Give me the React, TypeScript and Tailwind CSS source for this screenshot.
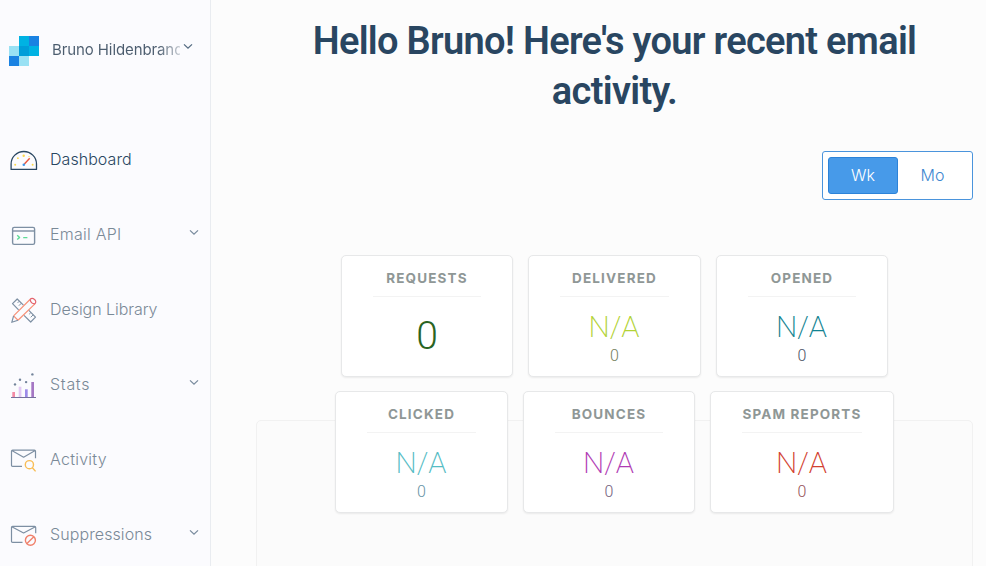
import type { ReactNode } from "react";

function Chevron({ color }: { color: string }) {
  return (
    <svg width="10" height="8" viewBox="0 0 10 8" fill="none" stroke={color} strokeWidth="1.3">
      <path d="M1 1.4 5 5.2 9 1.4" />
    </svg>
  );
}

function Icon({ children }: { children: ReactNode }) {
  return (
    <svg className="shrink-0" width="28" height="30" viewBox="0 0 28 30" fill="none" stroke="#7d8fa3" strokeWidth="1.2" strokeLinejoin="round">
      {children}
    </svg>
  );
}

const dashboardIcon = (
  <Icon>
    <path d="M1.1 24.4V19a12.7 12.5 0 0 1 25.4 0v5.4Z" stroke="#294661" strokeWidth="1.3" />
    <g fill="#fbd84b" stroke="none">
      <circle cx="13.7" cy="10.7" r="1.2" />
      <circle cx="7.9" cy="13.2" r="0.9" />
      <circle cx="19" cy="11.6" r="0.7" />
      <circle cx="5.2" cy="19.8" r="1" />
      <circle cx="22.6" cy="19.8" r="1" />
    </g>
    <path d="M14.4 19 19.7 13.2" stroke="#e8553c" strokeWidth="1.4" />
    <circle cx="13.8" cy="19.8" r="1.3" fill="#3d94e8" stroke="none" />
  </Icon>
);

const apiIcon = (
  <Icon>
    <rect x="2.6" y="7.4" width="22" height="17" rx="1.6" strokeWidth="1.4" />
    <path d="M2.6 11H24.6" strokeWidth="1.4" />
    <path d="M7.2 15.2 9.6 17.4 7.2 19.6M13.2 17.6H17.4" stroke="#5ddb95" strokeWidth="1.4" />
  </Icon>
);

const designIcon = (
  <Icon>
    <path d="M8.6 14.9 2.5 8.7 7.2 4 13.4 10.1M18.6 15.2 25.5 22.2 20.7 27 14 20.4" />
    <path d="M9.3 6.2 7.6 7.9M11.4 8.2 8.9 10.7M20.9 17.5 19.2 19.2M23.2 19.8 20.7 22.3" strokeWidth="1" />
    <path d="M3.6 20.9 20 4.5M8 25.2 24.9 8.9M3.6 20.9 8 25.2" stroke="#f79178" />
    <path d="M20 4.5C22.6 1.8 27.8 5.6 24.9 8.9M20 4.5C21 8 22 8.6 24.9 8.9" stroke="#e4636d" />
    <path d="M3.6 20.9 1.8 27.3 8 25.2" />
  </Icon>
);

const statsIcon = (
  <Icon>
    <g stroke="none">
      <path d="M2.3 22H5V27H2.3Z" fill="#f38ba6" />
      <path d="M8.7 16.7H11.4V27H8.7Z" fill="#e2c9f3" />
      <path d="M15 19.3H17.7V27H15Z" fill="#9d8be9" />
      <path d="M21.3 12H24V27H21.3Z" fill="#a577c4" />
      <g fill="#72839a">
        <circle cx="5" cy="14.4" r="1.2" />
        <circle cx="10" cy="9.7" r="1.2" />
        <circle cx="16.1" cy="12.1" r="1.2" />
        <circle cx="22.4" cy="4.4" r="1.2" />
      </g>
    </g>
    <path d="M1 27.5H26" stroke="#75709d" strokeWidth="1" />
  </Icon>
);

const activityIcon = (
  <Icon>
    <path d="M12 21.4H2.6Q1.5 21.4 1.5 20.3V6.3Q1.5 5.2 2.6 5.2H24.4Q25.5 5.2 25.5 6.3V13.2M1.8 5.6 13.6 12.2 25.2 5.6" />
    <circle cx="19.4" cy="19.7" r="4.1" stroke="#f8bd55" strokeWidth="1.4" />
    <path d="M22.4 22.8 25.6 26.4" stroke="#f8bd55" strokeWidth="1.4" />
  </Icon>
);

const suppressionsIcon = (
  <Icon>
    <path d="M12.5 22.4H2.6Q1.5 22.4 1.5 21.3V7.4Q1.5 6.3 2.6 6.3H24.6Q25.7 6.3 25.7 7.4V13.2M1.8 6.7 13.6 13 25.4 6.7" />
    <circle cx="20.4" cy="20.2" r="5" stroke="#f0806b" strokeWidth="1.4" />
    <path d="M17 23.6 23.8 16.8" stroke="#f0806b" strokeWidth="1.4" />
  </Icon>
);

const navItems = [
  { label: "Dashboard", icon: dashboardIcon, active: true, tracking: "tracking-[0.05px]" },
  { label: "Email API", icon: apiIcon, expandable: true, tracking: "tracking-[0.25px]" },
  { label: "Design Library", icon: designIcon, tracking: "tracking-[-0.05px]" },
  { label: "Stats", icon: statsIcon, expandable: true, tracking: "tracking-[0.7px]" },
  { label: "Activity", icon: activityIcon, tracking: "tracking-[0.25px]" },
  { label: "Suppressions", icon: suppressionsIcon, expandable: true, tracking: "tracking-[0.1px]" },
];

function Logo() {
  return (
    <svg className="shrink-0" width="30" height="30" viewBox="0 0 30 30" shapeRendering="crispEdges">
      <path d="M10 0H20V10H10Z" fill="#00b2e3" />
      <path d="M20 0H30V10H20Z" fill="#1a82e2" />
      <path d="M0 10H10V20H0Z" fill="#99e1f4" />
      <path d="M10 10H20V20H10Z" fill="#009dd9" />
      <path d="M20 10H30V20H20Z" fill="#00b2e3" />
      <path d="M0 20H10V30H0Z" fill="#1a82e2" />
      <path d="M10 20H20V30H10Z" fill="#99e1f4" />
    </svg>
  );
}

function Sidebar() {
  return (
    <aside className="w-[211px] shrink-0 border-r border-[#e9ecf0] bg-[#fbfbfe]">
      <div className="flex h-[122px] items-start pl-[9px] pt-9">
        <Logo />
        <div className="ml-[13px] mt-[2px] w-[128px] overflow-hidden whitespace-nowrap bg-linear-to-r from-[#4b5c6e] from-82% to-[#4b5c6e]/30 bg-clip-text text-[15px] leading-6 tracking-[-0.1px] text-transparent">
          Bruno Hildenbrand
        </div>
        <div className="ml-[3px] mt-[7px]">
          <Chevron color="#546b81" />
        </div>
      </div>
      <nav>
        {navItems.map((item) => (
          <div key={item.label} className="flex h-[75px] items-center pl-[10px] pr-[11px]">
            {item.icon}
            <span className={`mb-[2px] ml-3 flex-1 text-base font-light ${item.tracking} ${item.active ? "text-[#294661]" : "text-[#7a8997]"}`}>
              {item.label}
            </span>
            {item.expandable && (
              <div className="mb-1">
                <Chevron color="#7a8c9e" />
              </div>
            )}
          </div>
        ))}
      </nav>
    </aside>
  );
}

type CardProps = { title: string; value?: string; count?: string; color: string; countColor?: string; width?: string };

function StatCard({ title, value = "N/A", count, color, countColor = "", width = "w-[172px]" }: CardProps) {
  return (
    <section className={`${width} h-[122px] rounded-[5px] border border-[#e7e8e9] bg-white px-[31px] text-center shadow-[0_1px_2px_rgba(0,0,0,0.07)]`}>
      <h2 className="flex h-[41px] justify-center whitespace-nowrap border-b border-[#f3f3f3] pt-3 text-[13.5px] font-bold leading-5 tracking-[1.15px] text-[#8f9796]">
        {title}
      </h2>
      {count ? (
        <>
          <div className={`mt-[11px] h-[37px] pr-px font-[Roboto] text-[30px] font-extralight leading-[37px] ${color}`}>{value}</div>
          <div className={`font-[Roboto] text-base font-light leading-[21px] ${countColor}`}>{count}</div>
        </>
      ) : (
        <div className={`mt-[14px] font-[Roboto] text-[39px] font-light leading-[50px] ${color}`}>{value}</div>
      )}
    </section>
  );
}

export default function App() {
  return (
    <div className="flex h-[566px] w-[986px] overflow-hidden bg-[#fcfcfc] font-[Inter,'Liberation_Sans',sans-serif]">
      <Sidebar />
      <main className="flex flex-1 flex-col pl-[45px] pr-[13px] pt-4">
        <h1 className="text-center font-[Roboto] text-[38px] font-semibold leading-[50px] tracking-[-0.7px] text-[#294661]">
          Hello Bruno! Here's your recent email
          <br />
          activity.
        </h1>
        <div className="mt-[35px] flex h-[49px] w-[151px] items-center self-end rounded-[3px] border border-[#4a94dc] bg-white p-[5px] text-base">
          <button className="h-[37px] w-[70px] rounded-[3px] border border-[#2d83d8] bg-[#479ae9] pb-0.5 font-light text-white">Wk</button>
          <button className="h-[37px] w-[69px] pb-0.5 font-light text-[#3d87d0]">Mo</button>
        </div>
        <div className="relative z-10 mt-[55px] flex flex-col gap-[14px]">
          <div className="flex justify-center gap-[15px]">
            <StatCard title="REQUESTS" value="0" color="text-[#2a6422]" />
            <StatCard title="DELIVERED" count="0" color="text-[#b2d235]" countColor="text-[#74805c]" width="w-[173px]" />
            <StatCard title="OPENED" count="0" color="text-[#128391]" countColor="text-[#4c5264]" />
          </div>
          <div className="flex justify-center gap-[15px]">
            <StatCard title="CLICKED" count="0" color="text-[#55bcc4]" countColor="text-[#6793a5]" width="w-[173px]" />
            <StatCard title="BOUNCES" count="0" color="text-[#b03bb4]" countColor="text-[#73607c]" />
            <StatCard title="SPAM REPORTS" count="0" color="text-[#d2412f]" countColor="text-[#945158]" width="w-[184px]" />
          </div>
        </div>
        <div className="-mt-[93px] h-[200px] shrink-0 rounded-[5px] border border-[#f1f1f1] bg-[#fbfbfb]" />
      </main>
    </div>
  );
}
